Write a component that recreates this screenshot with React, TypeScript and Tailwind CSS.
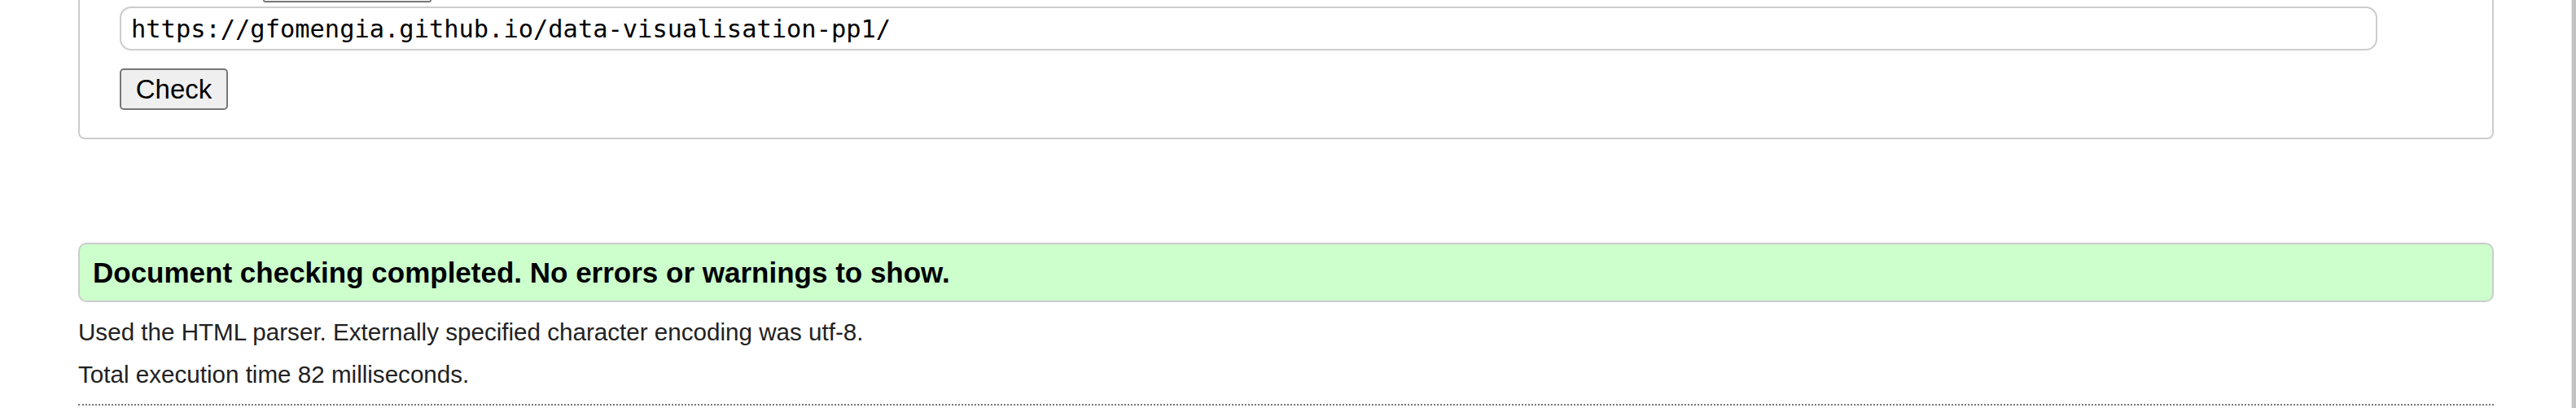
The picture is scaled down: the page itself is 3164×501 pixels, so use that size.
import { useState } from "react";

const DOC_URL = "https://gfomengia.github.io/data-visualisation-pp1/";

export default function App() {
  const [url, setUrl] = useState(DOC_URL);

  return (
    <div className="flex h-[501px] w-full overflow-hidden bg-white font-['Liberation_Sans',Arial,sans-serif] text-[#222]">
      <main className="flex-1 pl-[96px] pr-[95px]">
        {/* Check form (top cut off) */}
        <div className="rounded-b-[8px] border-2 border-t-0 border-[#cccccc] pb-[34px] pl-[49px]">
          <div className="ml-[176px] h-[3px] w-[207px] rounded-b-[4px] border-2 border-t-0 border-[#767676]" />
          <input
            value={url}
            onChange={(e) => setUrl(e.target.value)}
            className="mt-[5px] block h-[54px] w-[2773px] rounded-[14px] border-2 border-[#cccccc] px-[12px] font-['DejaVu_Sans_Mono','Liberation_Mono',monospace] text-[30.4px] text-black outline-none"
          />
          <button className="mt-[22px] block h-[51px] w-[133px] rounded-[5px] border-2 border-[#767676] bg-[#efefef] text-[33px] leading-none text-black">
            Check
          </button>
        </div>

        {/* Result */}
        <div className="mt-[127px] flex h-[73px] items-center rounded-[10px] border-2 border-[#cccccc] bg-[#ccffcc] pl-[16px]">
          <h2 className="text-[35px] leading-none font-bold text-black">
            Document checking completed. No errors or warnings to show.
          </h2>
        </div>
        <div className="mt-[11px] text-[29.6px] leading-[52px]">
          <p>Used the HTML parser. Externally specified character encoding was utf-8.</p>
          <p>Total execution time 82 milliseconds.</p>
        </div>
        <hr className="mt-[10px] border-0 border-t-2 border-dotted border-[#777]" />
      </main>

      {/* scrollbar edge */}
      <div className="w-[6px] border-l border-[#e9e9e9] bg-[#c2c2c2]" />
    </div>
  );
}
